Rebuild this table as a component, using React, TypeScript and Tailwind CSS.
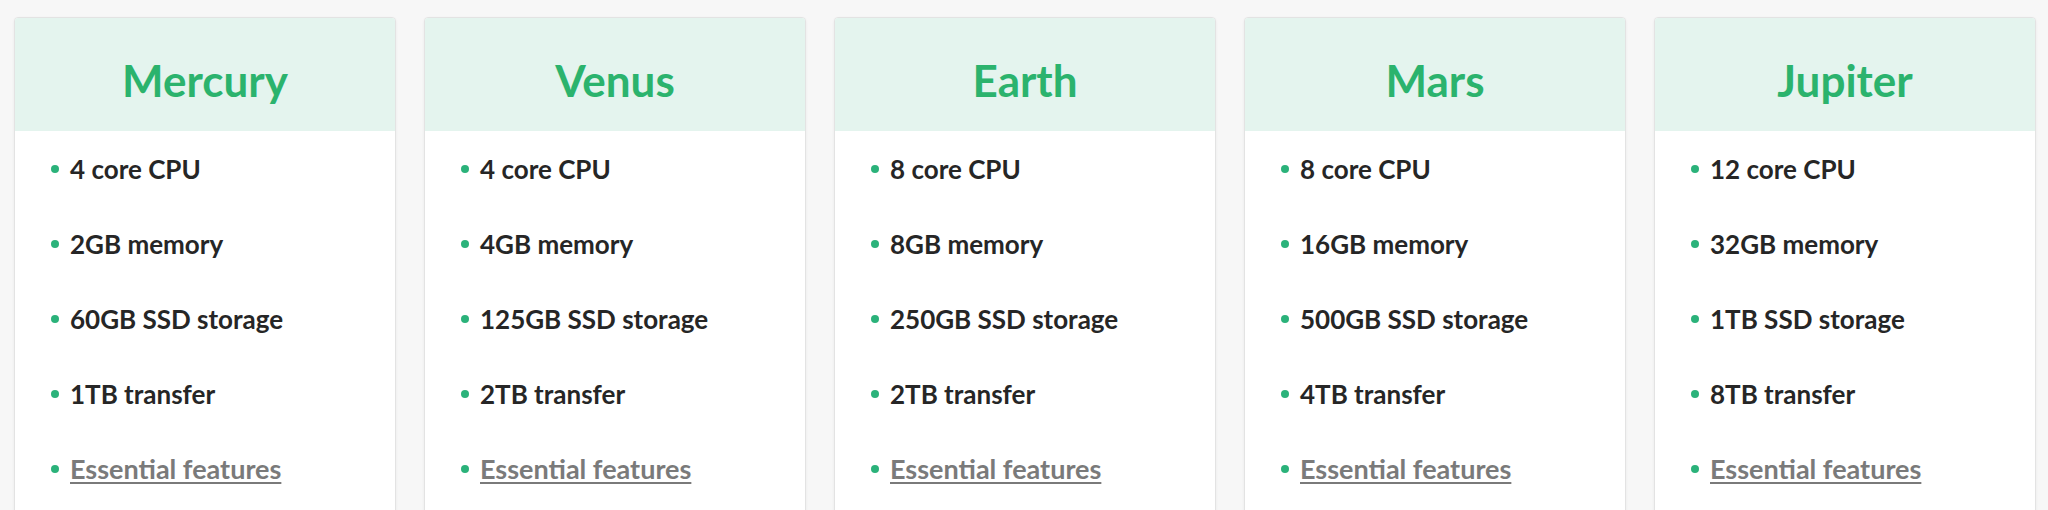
const plans = [
  { name: 'Mercury', specs: ['4 core CPU', '2GB memory', '60GB SSD storage', '1TB transfer'] },
  { name: 'Venus', specs: ['4 core CPU', '4GB memory', '125GB SSD storage', '2TB transfer'] },
  { name: 'Earth', specs: ['8 core CPU', '8GB memory', '250GB SSD storage', '2TB transfer'] },
  { name: 'Mars', specs: ['8 core CPU', '16GB memory', '500GB SSD storage', '4TB transfer'] },
  { name: 'Jupiter', specs: ['12 core CPU', '32GB memory', '1TB SSD storage', '8TB transfer'] },
]

function Bullet() {
  return <span className="w-2 h-2 rounded-full bg-[#2bb27a] shrink-0" />
}

function PlanCard({ name, specs }: { name: string; specs: string[] }) {
  return (
    <div className="w-[382px] shrink-0 rounded-t-[4px] border border-[#e3e3e3] bg-white shadow-[0_1px_3px_rgba(0,0,0,0.06)] overflow-hidden">
      <div className="h-[113px] bg-[#e4f4ee] flex items-center justify-center pt-[10px]">
        <h2 className="text-[44px] font-bold text-[#2bb36d] leading-none">{name}</h2>
      </div>
      <ul className="pl-[36px] pt-[23px] pb-10 flex flex-col gap-[45px]">
        {specs.map((s) => (
          <li key={s} className="flex items-center gap-[11px] h-[30px] text-[26px] font-bold text-[#262626]">
            <Bullet />
            <span>{s}</span>
          </li>
        ))}
        <li className="flex items-center gap-[11px] h-[30px] text-[27px] font-bold">
          <Bullet />
          <a href="#" className="text-[#7a7a7a] underline decoration-2 underline-offset-[3px]">
            Essential features
          </a>
        </li>
      </ul>
    </div>
  )
}

export default function App() {
  return (
    <div className="h-[510px] overflow-hidden bg-[#f7f7f7] pl-[14px] pt-[17px] font-['Lato',sans-serif]">
      <div className="flex gap-[28px]">
        {plans.map((p) => (
          <PlanCard key={p.name} {...p} />
        ))}
      </div>
    </div>
  )
}
